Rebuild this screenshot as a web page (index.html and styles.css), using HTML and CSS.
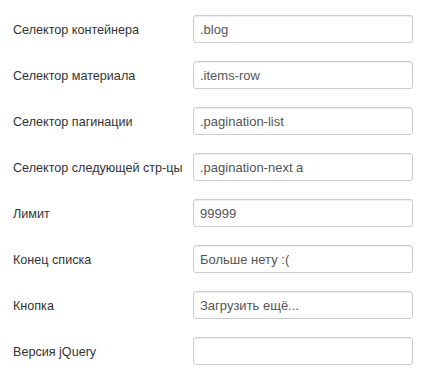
FILE: index.html
```html
<!DOCTYPE html>
<html lang="ru">
<head>
    <meta charset="UTF-8">
    <title>Настройки</title>
    <link rel="stylesheet" href="styles.css">
</head>
<body>
    <form class="settings">
        <div class="control-group">
            <label class="control-label" for="f1">Селектор контейнера</label>
            <input type="text" id="f1" value=".blog">
        </div>
        <div class="control-group">
            <label class="control-label" for="f2">Селектор материала</label>
            <input type="text" id="f2" value=".items-row">
        </div>
        <div class="control-group">
            <label class="control-label" for="f3">Селектор пагинации</label>
            <input type="text" id="f3" value=".pagination-list">
        </div>
        <div class="control-group">
            <label class="control-label" for="f4">Селектор следующей стр-цы</label>
            <input type="text" id="f4" value=".pagination-next a">
        </div>
        <div class="control-group">
            <label class="control-label" for="f5">Лимит</label>
            <input type="text" id="f5" value="99999">
        </div>
        <div class="control-group">
            <label class="control-label" for="f6">Конец списка</label>
            <input type="text" id="f6" value="Больше нету :(">
        </div>
        <div class="control-group">
            <label class="control-label" for="f7">Кнопка</label>
            <input type="text" id="f7" value="Загрузить ещё...">
        </div>
        <div class="control-group">
            <label class="control-label" for="f8">Версия jQuery</label>
            <input type="text" id="f8" value="">
        </div>
    </form>
</body>
</html>
```

FILE: styles.css
```css
body {
    font-family: "Liberation Sans", Arial, sans-serif;
    font-size: 13px;
    margin: 0;
    padding: 0;
    background-color: #fff;
    color: #333;
}
.settings {
    padding: 15px 13px;
    display: flex;
    flex-direction: column;
    gap: 18px;
}
.control-group {
    display: flex;
    align-items: center;
}
.control-label {
    width: 180px;
    padding-top: 2px;
    font-size: 12.6px;
}
input {
    box-sizing: border-box;
    width: 220px;
    height: 28px;
    padding: 4px 6px;
    border: 1px solid #ccc;
    border-radius: 3px;
    font-family: inherit;
    font-size: 13px;
    color: #555;
    box-shadow: inset 0 1px 1px rgba(0,0,0,0.075);
}
```
